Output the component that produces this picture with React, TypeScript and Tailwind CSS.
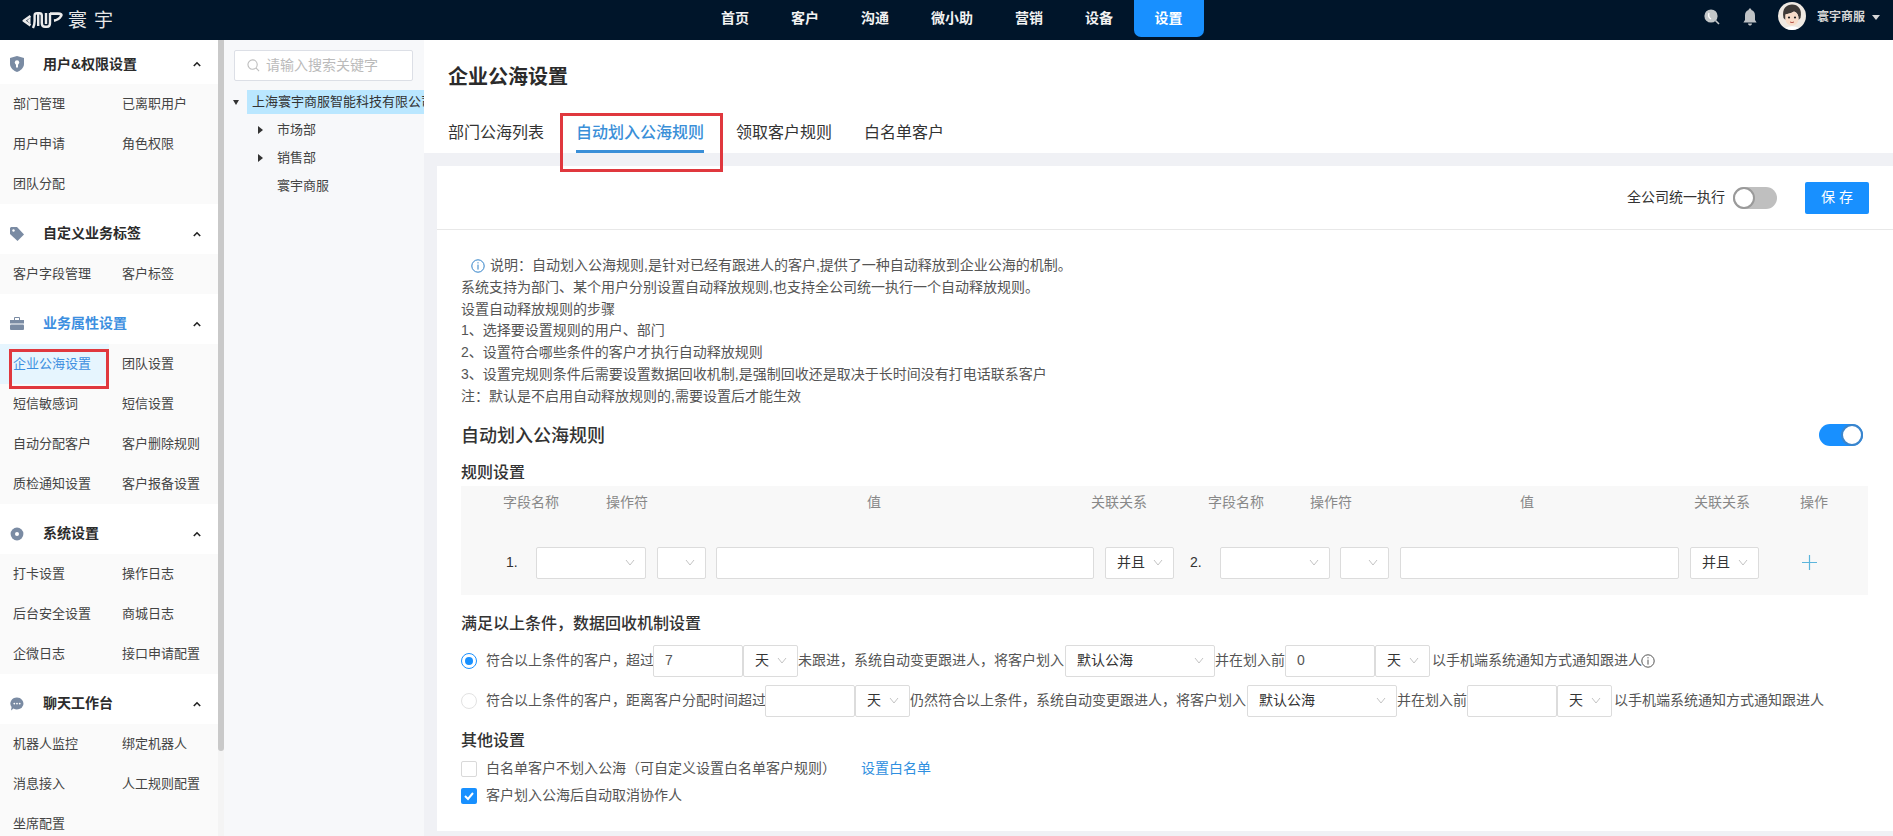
import React from "react";

const FONT = "font-['Liberation_Sans','Noto_Sans_CJK_SC',sans-serif]";

function Chevron({ className = "" }: { className?: string }) {
  return (
    <svg viewBox="0 0 10 7" className={"w-[10px] h-[7px] " + className} fill="none" stroke="#c4c4c4" strokeWidth="1">
      <path d="M1 1 L5 6 L9 1" />
    </svg>
  );
}

function Select({ w, text }: { w: string; text?: string }) {
  return (
    <div className={"h-8 shrink-0 bg-white border border-[#dcdcdc] rounded-[2px] flex items-center justify-between pl-[11px] pr-[10px] text-[14px] text-[#333] " + w}>
      <span>{text ?? ""}</span>
      <Chevron />
    </div>
  );
}

function Input({ w, text }: { w: string; text?: string }) {
  return (
    <div className={"h-8 shrink-0 bg-white border border-[#dcdcdc] rounded-[2px] flex items-center pl-[11px] text-[14px] text-[#555] " + w}>
      {text ?? ""}
    </div>
  );
}

function SectionHeader({ title, icon, active, first }: { title: string; icon: React.ReactNode; active?: boolean; first?: boolean }) {
  return (
    <div className={"flex items-center pl-[10px] pr-[17px] " + (first ? "h-[44px] pt-[4px]" : "h-[50px] pt-[9px]")}>
      <span className="w-[14px] h-[16px] flex items-center justify-center">{icon}</span>
      <span className={"ml-[19px] flex-1 text-[14px] font-bold " + (active ? "text-[#3d8fe0]" : "text-[#2b2b2b]")}>{title}</span>
      <svg viewBox="0 0 10 7" className="w-[8px] h-[6px]" fill="none" stroke="#222" strokeWidth="2"><path d="M1 6 L5 2 L9 6" /></svg>
    </div>
  );
}

function Menu({ items, selected }: { items: string[]; selected?: string }) {
  return (
    <div className="grid grid-cols-[109px_109px] bg-[#fafafa]">
      {items.map((t) => (
        <div
          key={t}
          className={"h-10 flex items-center pl-[13px] text-[13px] " + (t === selected ? "bg-[#e6f5fe] text-[#3d8fe0]" : "text-[#444]")}
        >
          {t}
        </div>
      ))}
    </div>
  );
}

const Shield = (
  <svg viewBox="0 0 14 16" className="w-[14px] h-[16px]"><path d="M7 0 L14 2 V8 C14 12 10 15 7 16 C4 15 0 12 0 8 V2 Z" fill="#7a8ba3" /><circle cx="7" cy="6.5" r="2.2" fill="#fff" /><rect x="6" y="7" width="2" height="4.5" fill="#fff" /></svg>
);
const Tag = (
  <svg viewBox="0 0 14 14" className="w-[14px] h-[14px]"><path d="M0 1 L1 0 H7 L14 7.5 L7.5 14 L0 7 Z" fill="#7a8ba3" /><circle cx="3.5" cy="3.5" r="1.2" fill="#fff" /></svg>
);
const Case = (
  <svg viewBox="0 0 14 13" className="w-[14px] h-[13px]"><path d="M5 0 H9 A1 1 0 0 1 10 1 V3 H14 V6.5 H0 V3 H4 V1 A1 1 0 0 1 5 0 Z M5 1 V3 H9 V1 Z" fill="#7a8ba3" fillRule="evenodd" /><rect x="0" y="7.5" width="14" height="5.5" rx="1" fill="#7a8ba3" /></svg>
);
const Gear = (
  <svg viewBox="0 0 14 14" className="w-[14px] h-[14px]"><circle cx="7" cy="7" r="6.4" fill="#7a8ba3" /><circle cx="7" cy="7" r="2" fill="#fff" /></svg>
);
const Chat = (
  <svg viewBox="0 0 14 14" className="w-[14px] h-[14px]"><path d="M7 0.5 A6.5 6 0 1 1 3.5 11.6 L1 13.4 L1.6 10 A6.5 6 0 0 1 7 0.5 Z" fill="#7a8ba3" /><circle cx="4.3" cy="6.6" r="0.9" fill="#fff" /><circle cx="7" cy="6.6" r="0.9" fill="#fff" /><circle cx="9.7" cy="6.6" r="0.9" fill="#fff" /></svg>
);

function Info({ className = "" }: { className?: string }) {
  return (
    <svg viewBox="0 0 14 14" className={"w-[14px] h-[14px] " + className} fill="none">
      <circle cx="7" cy="7" r="6.2" stroke="currentColor" strokeWidth="1" />
      <rect x="6.5" y="3.2" width="1" height="1.2" fill="currentColor" />
      <rect x="6.5" y="5.6" width="1" height="5" fill="currentColor" />
    </svg>
  );
}

function Radio({ on }: { on?: boolean }) {
  return (
    <span className={"w-4 h-4 shrink-0 rounded-full bg-white border flex items-center justify-center " + (on ? "border-[#1890ff]" : "border-[#e2e2e2]")}>
      {on && <span className="w-2 h-2 rounded-full bg-[#1890ff]" />}
    </span>
  );
}

function Switch({ on }: { on?: boolean }) {
  return (
    <div className={"w-[44px] h-[22px] rounded-full flex items-center " + (on ? "bg-[#1890ff] justify-end" : "bg-[#bfbfbf] justify-start")}>
      <span className={"w-[22px] h-[22px] rounded-full bg-white border-2 " + (on ? "border-[#3b85cc]" : "border-[#9a9a9a]")} />
    </div>
  );
}

export default function App() {
  const nav: [string, string][] = [["首页", "w-[70px]"], ["客户", "w-[70px]"], ["沟通", "w-[70px]"], ["微小助", "w-[84px]"], ["营销", "w-[70px]"], ["设备", "w-[70px]"]];
  const notes = [
    "系统支持为部门、某个用户分别设置自动释放规则,也支持全公司统一执行一个自动释放规则。",
    "设置自动释放规则的步骤",
    "1、选择要设置规则的用户、部门",
    "2、设置符合哪些条件的客户才执行自动释放规则",
    "3、设置完规则条件后需要设置数据回收机制,是强制回收还是取决于长时间没有打电话联系客户",
    "注：默认是不启用自动释放规则的,需要设置后才能生效",
  ];
  return (
    <div className={"h-screen w-full overflow-hidden flex flex-col relative bg-[#f0f1f5] " + FONT}>
      {/* top bar */}
      <header className="h-10 shrink-0 bg-[#00152a] flex items-start">
        <div className="w-[700px] h-10 shrink-0 flex items-center pl-[22px]">
          <svg viewBox="0 0 41 17" className="w-[41px] h-[17px]" fill="none" stroke="#ececec" strokeWidth="2.4" strokeLinejoin="round">
            <path d="M8.5 4 L1.8 8.7 L8.5 13.4" strokeWidth="2.6" />
            <path d="M8.5 5.5 L5 8.7 L8.5 12 Z" fill="#ececec" stroke="none" />
            <path d="M11 16 C12 14 12.6 12 12.6 9 V3.4 Q12.6 1.2 15 1.2 H17.4 Q19.8 1.2 19.8 3.4 V11 Q19.8 14.8 23 14.8 H25 Q28 14.8 28 11 V1" />
            <path d="M16.2 2 V14" />
            <path d="M24 1 V12" />
            <path d="M28 1.6 H36 Q40.5 1.6 39 4 Q37 7.8 32 8.6" strokeWidth="2.6" />
          </svg>
          <span className="ml-[5px] text-[19px] tracking-[7px] text-[#e6e6e6] leading-none whitespace-nowrap">寰宇</span>
        </div>
        <nav className="flex items-start">
          {nav.map(([n, w]) => (
            <div key={n} className={"h-[37px] flex items-center justify-center text-[14px] font-bold text-[#f2f2f2] " + w}>{n}</div>
          ))}
          <div className="w-[70px] h-[37px] flex items-center justify-center text-[14px] font-bold text-white bg-[#1890ff] rounded-b-[7px] -ml-[0.5px]">设置</div>
        </nav>
        <div className="ml-auto h-10 flex items-center pr-[13px]">
          <svg viewBox="0 0 16 16" className="w-[16px] h-[16px] -mt-[7px]">
            <circle cx="7" cy="7" r="6.6" fill="#c2c6c8" />
            <path d="M5 4 Q3.6 8 7 10" stroke="#fff" strokeWidth="1.4" fill="none" />
            <path d="M11.5 11.5 L15 15" stroke="#c2c6c8" strokeWidth="1.6" />
          </svg>
          <svg viewBox="0 0 14 18" className="w-[14px] h-[18px] ml-[23px] -mt-[7px]">
            <path d="M7 0.5 C8 0.5 8.4 1.2 8.4 2 C10.8 2.8 12 4.8 12 7.5 V12 L13.6 14.6 H0.4 L2 12 V7.5 C2 4.8 3.2 2.8 5.6 2 C5.6 1.2 6 0.5 7 0.5 Z" fill="#bfc3c6" />
            <path d="M5 15.6 H9 C8.8 17 8 17.6 7 17.6 C6 17.6 5.2 17 5 15.6 Z" fill="#bfc3c6" />
          </svg>
          <svg viewBox="0 0 28 28" className="w-[28px] h-[28px] ml-[21px] -mt-[8px]">
            <circle cx="14" cy="14" r="14" fill="#efe9e2" />
            <path d="M5.5 16 C3.5 6 9 2.5 14 2.5 C20 2.5 24.5 7 22.5 16 L20.5 18 C21 13 19 10.5 16 9.5 C13 11.5 9.5 11.5 7.5 12.5 L7.5 18 Z" fill="#3f3a37" />
            <path d="M7.5 12.5 C9.5 11.5 13 11.5 16 9.5 C19 10.5 20.5 13 20.5 17 C20.5 21 17.5 23.5 14 23.5 C10.5 23.5 7.5 21 7.5 17 Z" fill="#f8dcc8" />
            <circle cx="11" cy="15.5" r="1.1" fill="#222" />
            <circle cx="17" cy="15.5" r="1.1" fill="#222" />
            <path d="M12 20 Q14 21.2 16 20" stroke="#b5534a" strokeWidth="1" fill="none" />
            <path d="M7 26 Q14 22.5 21 26 Q18 28 14 28 Q10 28 7 26 Z" fill="#fff" />
          </svg>
          <span className="ml-[11px] text-[12px] font-bold text-[#d6d6d6] -mt-[7px] whitespace-nowrap">寰宇商服</span>
          <span className="ml-[7px] -mt-[6px] w-0 h-0 border-l-[4px] border-r-[4px] border-t-[5px] border-l-transparent border-r-transparent border-t-[#d6d6d6]" />
        </div>
      </header>

      <div className="flex-1 min-h-0 flex">
        {/* sidebar */}
        <aside className="w-[218px] shrink-0 bg-white overflow-hidden">
          <SectionHeader first title="用户&权限设置" icon={Shield} />
          <Menu items={["部门管理", "已离职用户", "用户申请", "角色权限", "团队分配"]} />
          <SectionHeader title="自定义业务标签" icon={Tag} />
          <Menu items={["客户字段管理", "客户标签"]} />
          <SectionHeader active title="业务属性设置" icon={Case} />
          <Menu selected="企业公海设置" items={["企业公海设置", "团队设置", "短信敏感词", "短信设置", "自动分配客户", "客户删除规则", "质检通知设置", "客户报备设置"]} />
          <SectionHeader title="系统设置" icon={Gear} />
          <Menu items={["打卡设置", "操作日志", "后台安全设置", "商城日志", "企微日志", "接口申请配置"]} />
          <SectionHeader title="聊天工作台" icon={Chat} />
          <Menu items={["机器人监控", "绑定机器人", "消息接入", "人工规则配置", "坐席配置"]} />
        </aside>
        <div className="w-[6px] shrink-0 bg-[#f4f4f4]">
          <div className="h-[711px] bg-[#c9c9c9] rounded-b-[3px]" />
        </div>

        {/* tree */}
        <section className="w-[200px] shrink-0 bg-[#f7f8fa] overflow-hidden text-[13px] text-[#444]">
          <div className="ml-[10px] mt-[10px] w-[179px] h-[31px] bg-white border border-[#dcdfe6] rounded-[2px] flex items-center pl-[12px]">
            <svg viewBox="0 0 14 14" className="w-[13px] h-[13px]" fill="none" stroke="#bdbdbd" strokeWidth="1.2"><circle cx="6" cy="6" r="5" /><path d="M9.6 9.6 L13 13" /></svg>
            <span className="ml-[6px] text-[14px] text-[#bbb] whitespace-nowrap">请输入搜索关键字</span>
          </div>
          <div className="mt-[9px] h-6 flex items-center">
            <span className="ml-[9px] w-0 h-0 border-l-[3.5px] border-r-[3.5px] border-t-[5px] border-l-transparent border-r-transparent border-t-[#333]" />
            <div className="ml-[8px] flex-1 h-6 bg-[#bae7ff] pl-[5px] flex items-center overflow-hidden whitespace-nowrap text-[#333]">上海寰宇商服智能科技有限公司</div>
          </div>
          <div className="mt-[2px] h-7 flex items-center pl-[34px]">
            <span className="w-0 h-0 border-t-[4px] border-b-[4px] border-l-[5px] border-t-transparent border-b-transparent border-l-[#333]" />
            <span className="ml-[14px]">市场部</span>
          </div>
          <div className="h-7 flex items-center pl-[34px]">
            <span className="w-0 h-0 border-t-[4px] border-b-[4px] border-l-[5px] border-t-transparent border-b-transparent border-l-[#333]" />
            <span className="ml-[14px]">销售部</span>
          </div>
          <div className="h-7 flex items-center pl-[53px]">寰宇商服</div>
        </section>

        {/* main */}
        <main className="flex-1 min-w-0 flex flex-col">
          <div className="h-[113px] shrink-0 bg-white pl-[24px] relative">
            <h1 className="pt-[26px] text-[20px] leading-[22px] font-semibold text-[#2b2b2b]">企业公海设置</h1>
            <div className="absolute left-[24px] bottom-0 flex gap-[32px] text-[16px] text-[#333]">
              <div className="h-[45px] pt-[13px] leading-[24px]">部门公海列表</div>
              <div className="h-[45px] pt-[13px] leading-[24px] text-[#3a8fd8] font-medium border-b-[3px] border-[#3a8fd8]">自动划入公海规则</div>
              <div className="h-[45px] pt-[13px] leading-[24px]">领取客户规则</div>
              <div className="h-[45px] pt-[13px] leading-[24px]">白名单客户</div>
            </div>
          </div>
          <div className="flex-1 min-h-0 pl-[13px] pt-[13px] pb-[5px]">
            <div className="h-full bg-white">
              <div className="h-[64px] border-b border-[#e8e8e8] flex items-center justify-end pr-[24px]">
                <span className="text-[14px] text-[#333]">全公司统一执行</span>
                <span className="ml-[8px]"><Switch /></span>
                <button className="ml-[28px] w-16 h-8 bg-[#1890ff] rounded-[2px] text-[14px] text-white">保 存</button>
              </div>
              <div className="pl-[24px] pr-[25px] text-[14px] text-[#555]">
                <div className="pt-[25px] leading-[21.83px]">
                  <div className="flex items-center pl-[10px]">
                    <Info className="text-[#2f80c8]" />
                    <span className="ml-[5px]">说明：自动划入公海规则,是针对已经有跟进人的客户,提供了一种自动释放到企业公海的机制。</span>
                  </div>
                  {notes.map((n) => (<div key={n}>{n}</div>))}
                </div>
                <div className="mt-[17px] flex items-center justify-between h-6">
                  <h2 className="text-[18px] font-medium text-[#333]">自动划入公海规则</h2>
                  <span className="mr-[5px] -mt-[4px]"><Switch on /></span>
                </div>
                <h3 className="mt-[12px] h-6 leading-6 text-[16px] font-medium text-[#333]">规则设置</h3>
                <div className="h-[109px] mt-px bg-[#f8f8f8]">
                  <div className="h-[34px] flex items-center text-[14px] text-[#888] whitespace-nowrap">
                    <span className="ml-[42px] w-[56px]">字段名称</span>
                    <span className="ml-[47px] w-[42px]">操作符</span>
                    <span className="ml-[219px] w-[14px]">值</span>
                    <span className="ml-[210px] w-[56px]">关联关系</span>
                    <span className="ml-[61px] w-[56px]">字段名称</span>
                    <span className="ml-[46px] w-[42px]">操作符</span>
                    <span className="ml-[168px] w-[14px]">值</span>
                    <span className="ml-[160px] w-[56px]">关联关系</span>
                    <span className="ml-[50px] w-[28px]">操作</span>
                  </div>
                  <div className="mt-[27px] flex items-center">
                    <span className="ml-[45px] w-[30px] text-[#333]">1.</span>
                    <Select w="w-[110px]" />
                    <span className="ml-[11px]"><Select w="w-[49px]" /></span>
                    <span className="ml-[10px]"><Input w="w-[378px]" /></span>
                    <span className="ml-[11px]"><Select w="w-[69px]" text="并且" /></span>
                    <span className="ml-[16px] w-[30px] text-[#333]">2.</span>
                    <Select w="w-[110px]" />
                    <span className="ml-[10px]"><Select w="w-[49px]" /></span>
                    <span className="ml-[11px]"><Input w="w-[279px]" /></span>
                    <span className="ml-[11px]"><Select w="w-[69px]" text="并且" /></span>
                    <svg viewBox="0 0 15 15" className="ml-[43px] w-[15px] h-[15px]" stroke="#5bb5dc" strokeWidth="1.2"><path d="M7.5 0 V15 M0 7.5 H15" /></svg>
                  </div>
                </div>
                <h3 className="mt-[17px] h-6 leading-6 text-[16px] font-medium text-[#333]">满足以上条件，数据回收机制设置</h3>
                <div className="mt-[9px] flex items-center h-8 whitespace-nowrap">
                  <Radio on />
                  <span className="ml-[9px] w-[167px]">符合以上条件的客户，超过</span>
                  <Input w="w-[90px]" text="7" />
                  <Select w="w-[55px]" text="天" />
                  <span className="w-[267px]">未跟进，系统自动变更跟进人，将客户划入</span>
                  <Select w="w-[150px]" text="默认公海" />
                  <span className="w-[70px]">并在划入前</span>
                  <Input w="w-[90px]" text="0" />
                  <Select w="w-[55px]" text="天" />
                  <span className="ml-[2px] w-[209px]">以手机端系统通知方式通知跟进人</span>
                  <Info className="text-[#555]" />
                </div>
                <div className="mt-[8px] flex items-center h-8 whitespace-nowrap">
                  <Radio />
                  <span className="ml-[9px] w-[279px]">符合以上条件的客户，距离客户分配时间超过</span>
                  <Input w="w-[90px]" />
                  <Select w="w-[55px]" text="天" />
                  <span className="w-[337px]">仍然符合以上条件，系统自动变更跟进人，将客户划入</span>
                  <Select w="w-[150px]" text="默认公海" />
                  <span className="w-[70px]">并在划入前</span>
                  <Input w="w-[90px]" />
                  <Select w="w-[55px]" text="天" />
                  <span className="ml-[2px]">以手机端系统通知方式通知跟进人</span>
                </div>
                <h3 className="mt-[12px] h-6 leading-6 text-[16px] font-medium text-[#333]">其他设置</h3>
                <div className="mt-[4px] h-6 flex items-center whitespace-nowrap">
                  <span className="w-4 h-4 bg-white border border-[#d9d9d9] rounded-[2px]" />
                  <span className="ml-[9px] w-[375px]">白名单客户不划入公海（可自定义设置白名单客户规则）</span>
                  <span className="text-[#2f8fe0]">设置白名单</span>
                </div>
                <div className="mt-[3px] h-6 flex items-center whitespace-nowrap">
                  <span className="w-4 h-4 bg-[#1890ff] rounded-[2px] flex items-center justify-center">
                    <svg viewBox="0 0 12 12" className="w-3 h-3" fill="none" stroke="#fff" strokeWidth="2"><path d="M2 6 L5 9 L10 3" /></svg>
                  </span>
                  <span className="ml-[9px]">客户划入公海后自动取消协作人</span>
                </div>
              </div>
            </div>
          </div>
        </main>
      </div>

      {/* annotation boxes */}
      <div className="absolute left-[9px] top-[349px] w-[100px] h-[40px] border-[3px] border-[#e0383e]" />
      <div className="absolute left-[560px] top-[113px] w-[163px] h-[59px] border-[3px] border-[#e0383e]" />
    </div>
  );
}
